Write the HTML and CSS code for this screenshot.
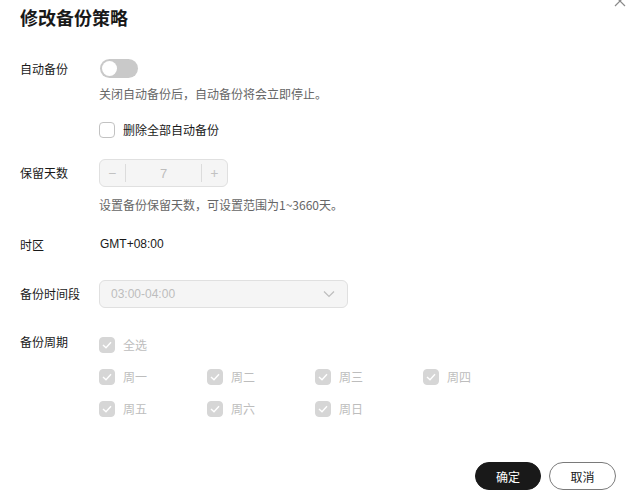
FILE: index.html
```html
<!DOCTYPE html>
<html lang="zh-CN">
<head>
<meta charset="utf-8">
<title>修改备份策略</title>
<link rel="stylesheet" href="styles.css">
</head>
<body>
<div class="dialog">
  <svg class="close" width="12" height="12" viewBox="0 0 12 12"><path d="M1 1L11 11M11 1L1 11" stroke="#8a8a8a" stroke-width="1.2" fill="none"/></svg>
  <h1 class="title">修改备份策略</h1>

  <div class="row row-auto">
    <div class="label">自动备份</div>
    <div class="content">
      <div class="switch"><span class="knob"></span></div>
      <div class="hint hint-auto">关闭自动备份后，自动备份将会立即停止。</div>
      <label class="check check-del"><span class="box"></span><span class="check-text">删除全部自动备份</span></label>
    </div>
  </div>

  <div class="row row-days">
    <div class="label label-tall">保留天数</div>
    <div class="content">
      <div class="number">
        <span class="num-btn">−</span>
        <span class="num-val">7</span>
        <span class="num-btn num-plus">+</span>
      </div>
      <div class="hint hint-days">设置备份保留天数，可设置范围为1~3660天。</div>
    </div>
  </div>

  <div class="row row-tz">
    <div class="label">时区</div>
    <div class="content"><div class="value">GMT+08:00</div></div>
  </div>

  <div class="row row-time">
    <div class="label label-tall">备份时间段</div>
    <div class="content">
      <div class="select">
        <span class="select-val">03:00-04:00</span>
        <svg class="chev" width="12" height="8" viewBox="0 0 12 8"><path d="M1 1.5L6 6.5L11 1.5" stroke="#bdbdbd" stroke-width="1.2" fill="none"/></svg>
      </div>
    </div>
  </div>

  <div class="row row-week">
    <div class="label">备份周期</div>
    <div class="content">
      <div class="week-grid">
        <label class="check dis"><span class="box on"><svg width="10" height="8" viewBox="0 0 10 8"><path d="M1 4L4 6.8L9 1.2" stroke="#fff" stroke-width="1.4" fill="none"/></svg></span><span class="check-text">全选</span></label>
        <span></span><span></span><span></span>
        <label class="check dis"><span class="box on"><svg width="10" height="8" viewBox="0 0 10 8"><path d="M1 4L4 6.8L9 1.2" stroke="#fff" stroke-width="1.4" fill="none"/></svg></span><span class="check-text">周一</span></label>
        <label class="check dis"><span class="box on"><svg width="10" height="8" viewBox="0 0 10 8"><path d="M1 4L4 6.8L9 1.2" stroke="#fff" stroke-width="1.4" fill="none"/></svg></span><span class="check-text">周二</span></label>
        <label class="check dis"><span class="box on"><svg width="10" height="8" viewBox="0 0 10 8"><path d="M1 4L4 6.8L9 1.2" stroke="#fff" stroke-width="1.4" fill="none"/></svg></span><span class="check-text">周三</span></label>
        <label class="check dis"><span class="box on"><svg width="10" height="8" viewBox="0 0 10 8"><path d="M1 4L4 6.8L9 1.2" stroke="#fff" stroke-width="1.4" fill="none"/></svg></span><span class="check-text">周四</span></label>
        <label class="check dis"><span class="box on"><svg width="10" height="8" viewBox="0 0 10 8"><path d="M1 4L4 6.8L9 1.2" stroke="#fff" stroke-width="1.4" fill="none"/></svg></span><span class="check-text">周五</span></label>
        <label class="check dis"><span class="box on"><svg width="10" height="8" viewBox="0 0 10 8"><path d="M1 4L4 6.8L9 1.2" stroke="#fff" stroke-width="1.4" fill="none"/></svg></span><span class="check-text">周六</span></label>
        <label class="check dis"><span class="box on"><svg width="10" height="8" viewBox="0 0 10 8"><path d="M1 4L4 6.8L9 1.2" stroke="#fff" stroke-width="1.4" fill="none"/></svg></span><span class="check-text">周日</span></label>
      </div>
    </div>
  </div>

  <div class="footer">
    <button class="btn btn-primary">确定</button>
    <button class="btn btn-default">取消</button>
  </div>
</div>
</body>
</html>
```

FILE: styles.css
```css
* { box-sizing: border-box; }
html, body { margin: 0; padding: 0; background: #fff; }
body {
  font-family: "Noto Sans CJK SC", "Noto Sans", sans-serif;
  font-size: 12px;
  color: #191919;
  width: 636px;
  height: 497px;
  overflow: hidden;
}
.dialog {
  position: relative;
  padding: 4px 20px 0 20px;
  height: 497px;
}
.close { position: absolute; left: 614px; top: -5px; }
.title {
  margin: 0;
  font-size: 18px;
  font-weight: 700;
  line-height: 26px;
  color: #191919;
}
.row {
  display: grid;
  grid-template-columns: 79px 1fr;
  align-items: start;
}
.label { line-height: 18px; color: #191919; }
.label-tall { line-height: 28px; }
.content { display: flex; flex-direction: column; align-items: flex-start; }

.row-auto { margin-top: 29px; }
.row-auto .label { margin-top: 1px; }
.switch {
  width: 38px; height: 19px; border-radius: 10px;
  background: #c9c9c9; margin-left: 1px; position: relative;
}
.knob {
  position: absolute; left: 2px; top: 2px;
  width: 15px; height: 15px; border-radius: 50%; background: #fff;
}
.hint { color: #666; line-height: 18px; }
.hint-auto { margin-top: 7px; }
.check { display: flex; align-items: center; gap: 8px; line-height: 18px; }
.check-del { margin-top: 18px; }
.box {
  width: 16px; height: 16px; border: 1px solid #c2c2c2; border-radius: 4px; background: #fff;
  display: flex; align-items: center; justify-content: center;
}
.box.on { background: #d6d6d6; border-color: #d6d6d6; }
.dis .check-text { color: #bdbdbd; }

.row-days { margin-top: 20px; }
.number {
  width: 129px; height: 28px; border: 1px solid #e0e0e0; border-radius: 6px;
  background: #f5f5f5; display: flex; align-items: center;
}
.num-btn {
  width: 26px; text-align: center; color: #c2c2c2; font-size: 14px; line-height: 18px;
  border-right: 1px solid #dcdcdc;
}
.num-plus { border-right: none; border-left: 1px solid #dcdcdc; }
.num-val { flex: 1; text-align: center; color: #bdbdbd; font-family: "Liberation Sans", sans-serif; font-size: 13px; }
.hint-days { margin-top: 9px; }

.row-tz { margin-top: 22px; }
.value { font-family: "Liberation Sans", sans-serif; font-size: 12px; line-height: 16px; margin-left: 1px; color: #191919; }

.row-time { margin-top: 26px; }
.select {
  width: 249px; height: 28px; border: 1px solid #e0e0e0; border-radius: 6px; background: #f5f5f5;
  display: flex; align-items: center; justify-content: space-between; padding: 0 12px 0 11px;
}
.select-val { font-family: "Liberation Sans", sans-serif; color: #bdbdbd; font-size: 12px; }

.row-week { margin-top: 25px; }
.week-grid {
  display: grid; grid-template-columns: repeat(4, 108px); row-gap: 14px; margin-top: 3px;
}

.footer {
  position: absolute; right: 20px; top: 462px;
  display: flex; gap: 8px;
}
.btn {
  height: 28px; border-radius: 14px; font-family: "Noto Sans CJK SC", sans-serif; font-size: 12px;
  padding: 0; cursor: pointer;
}
.btn-primary { width: 66px; background: #191919; color: #fff; border: 1px solid #191919; }
.btn-default { width: 67px; background: #fff; color: #191919; border: 1px solid #7a7a7a; }
```
